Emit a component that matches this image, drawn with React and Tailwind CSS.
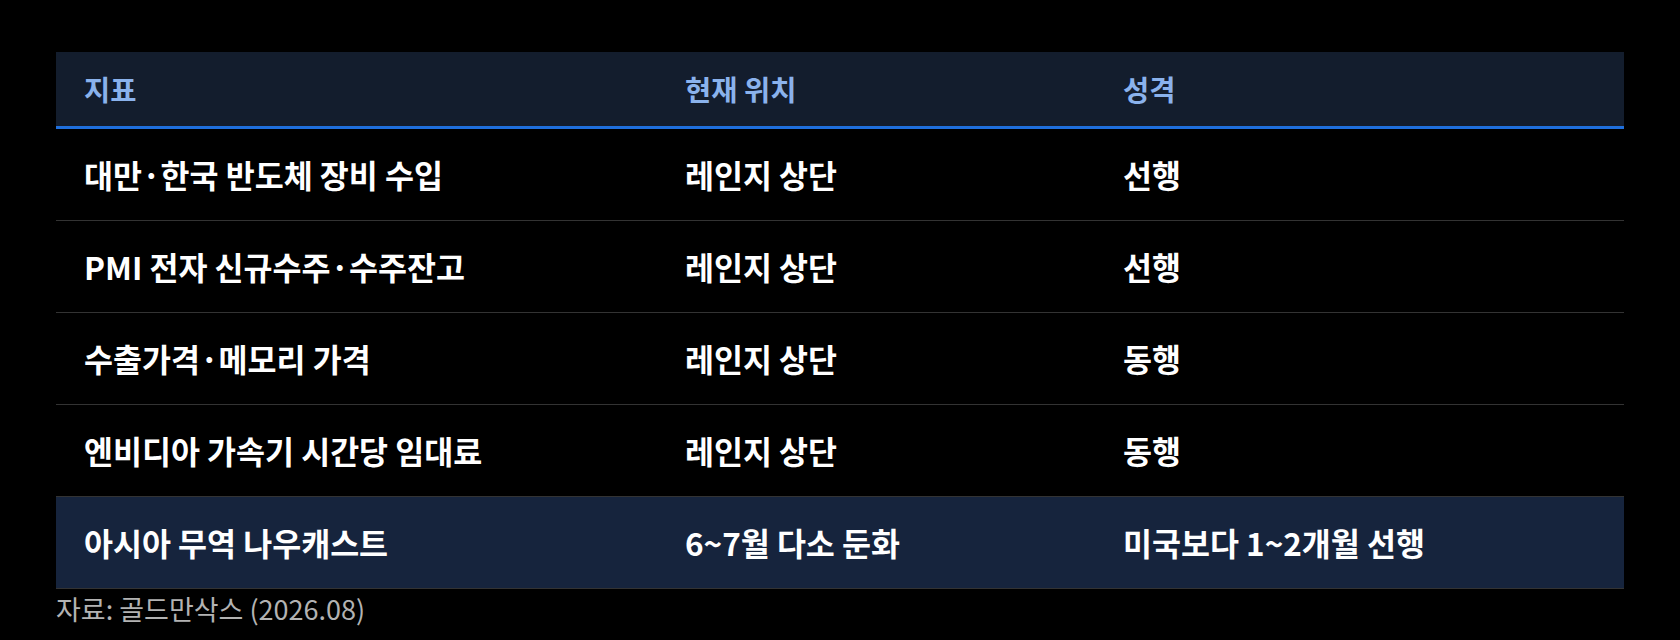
const rows = [
  ["대만·한국 반도체 장비 수입", "레인지 상단", "선행"],
  ["PMI 전자 신규수주·수주잔고", "레인지 상단", "선행"],
  ["수출가격·메모리 가격", "레인지 상단", "동행"],
  ["엔비디아 가속기 시간당 임대료", "레인지 상단", "동행"],
];

const font = "font-['Noto_Sans_CJK_KR','Noto_Sans',sans-serif]";

function Row({ cells, highlight }) {
  return (
    <div
      className={`grid grid-cols-[601px_438px_1fr] h-[92px] items-center border-b border-[#333333] ${
        highlight ? "bg-[#16243d]" : ""
      }`}
    >
      {cells.map((c, i) => (
        <div key={i} className="pl-7 text-[31.5px] font-semibold text-white leading-none">
          {c}
        </div>
      ))}
    </div>
  );
}

export default function App() {
  return (
    <div className={`w-[1680px] h-[640px] bg-black px-14 pt-[52px] ${font}`}>
      <div className="w-full">
        <div className="grid grid-cols-[601px_438px_1fr] h-[77px] items-center bg-[#131d2d] border-b-[3px] border-[#1f6fdc]">
          <div className="pl-7 text-[28.5px] font-bold text-[#8ab2ec]">지표</div>
          <div className="pl-7 text-[28.5px] font-bold text-[#8ab2ec]">현재 위치</div>
          <div className="pl-7 text-[28.5px] font-bold text-[#8ab2ec]">성격</div>
        </div>
        {rows.map((r, i) => (
          <Row key={i} cells={r} />
        ))}
        <Row cells={["아시아 무역 나우캐스트", "6~7월 다소 둔화", "미국보다 1~2개월 선행"]} highlight />
      </div>
      <p className="mt-[2px] text-[27px] leading-[36px] text-[#b3b3b3]">자료: 골드만삭스 (2026.08)</p>
    </div>
  );
}
